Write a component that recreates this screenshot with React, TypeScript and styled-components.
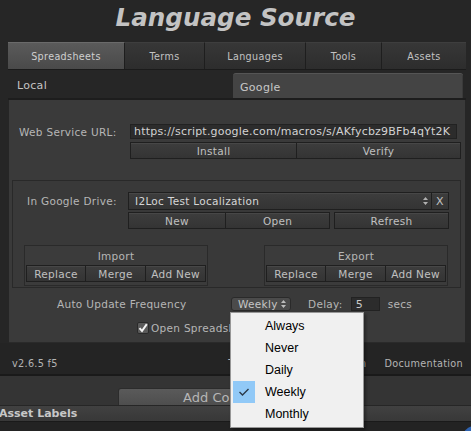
import React from 'react';
import styled, { createGlobalStyle } from 'styled-components';

const GlobalStyle = createGlobalStyle`
  html, body { margin: 0; padding: 0; background: #262626; }
  #root { width: 471px; height: 431px; }
`;

const UI = `"DejaVu Sans", "Liberation Sans", sans-serif`;

const Page = styled.div`
  position: relative;
  width: 471px;
  height: 431px;
  overflow: hidden;
  background: #262626;
  display: flex;
  flex-direction: column;
  font-family: ${UI};
  font-size: 10.5px;
  letter-spacing: 0.3px;
  color: #b6b6b6;
`;

const Title = styled.div`
  flex: none;
  height: 42px;
  box-sizing: border-box;
  padding-bottom: 7px;
  display: flex;
  align-items: center;
  justify-content: center;
  font-size: 24.6px;
  font-weight: bold;
  font-style: italic;
  letter-spacing: 0;
  color: #c3c3c3;
`;

const TabBar = styled.div`
  flex: none;
  display: flex;
  height: 27px;
  margin: 0 5px 0 8px;
  background: #1c1c1c;
`;

const Tab = styled.div<{ $w: number; $active?: boolean }>`
  width: ${(p) => p.$w}px;
  box-sizing: border-box;
  display: flex;
  align-items: center;
  justify-content: center;
  font-size: 9.6px;
  letter-spacing: 0.35px;
  color: ${(p) => (p.$active ? '#cfcfcf' : '#c2c2c2')};
  border-right: 1px solid #1e1e1e;
  border-top: 1px solid ${(p) => (p.$active ? '#6a6a6a' : '#3e3e3e')};
  background: ${(p) =>
    p.$active ? 'linear-gradient(#5a5a5a, #4a4a4a)' : 'linear-gradient(#373737, #2d2d2d)'};
  &:last-child { border-right: none; }
`;

const SourceRow = styled.div`
  flex: none;
  display: flex;
  align-items: flex-end;
  height: 31px;
  box-sizing: border-box;
  margin: 0 5px 0 8px;
  border-top: 1px solid #1b1b1b;
  border-bottom: 2px solid #1d1d1d;
  background: #262626;
`;

const SourceLocal = styled.div`
  flex: 1;
  align-self: center;
  padding-left: 9px;
  padding-top: 3px;
  font-size: 11px;
  color: #c4c4c4;
`;

const SourceGoogle = styled.div`
  width: 230px;
  height: 25px;
  margin-right: 3px;
  box-sizing: border-box;
  padding: 2px 0 0 7px;
  display: flex;
  align-items: center;
  font-size: 11px;
  color: #c8c8c8;
  background: #444444;
  border-top: 1px solid #555;
  border-radius: 3px 3px 0 0;
  box-shadow: inset -1px 0 0 #3a3a3a;
`;

const Panel = styled.div`
  flex: none;
  height: 243px;
  margin: 0 6px 0 9px;
  background: #3a3a3a;
  display: flex;
  flex-direction: column;
  border-bottom: 1px solid #2a2a2a;
  box-sizing: border-box;
`;

const FieldRow = styled.div<{ $top: number; $left: number; $h: number }>`
  display: flex;
  align-items: center;
  margin-top: ${(p) => p.$top}px;
  margin-left: ${(p) => p.$left}px;
  height: ${(p) => p.$h}px;
  flex: none;
`;

const Label = styled.div<{ $w?: number; $ml?: number }>`
  width: ${(p) => (p.$w ? `${p.$w}px` : 'auto')};
  margin-left: ${(p) => p.$ml ?? 0}px;
  flex: none;
  white-space: nowrap;
  color: #b6b6b6;
`;

const TextField = styled.div<{ $w: number }>`
  width: ${(p) => p.$w}px;
  height: 100%;
  box-sizing: border-box;
  padding-left: 3px;
  display: flex;
  align-items: center;
  overflow: hidden;
  white-space: nowrap;
  background: #2c2c2c;
  border: 1px solid #222;
  color: #d2d2d2;
  font-size: 11px;
  letter-spacing: 0.2px;
`;

const ButtonStrip = styled.div<{ $top: number; $left: number }>`
  display: flex;
  flex: none;
  height: 17px;
  margin-top: ${(p) => p.$top}px;
  margin-left: ${(p) => p.$left}px;
`;

const Button = styled.div<{ $w: number; $gap?: number }>`
  width: ${(p) => p.$w}px;
  margin-left: ${(p) => p.$gap ?? 0}px;
  height: 100%;
  box-sizing: border-box;
  display: flex;
  align-items: center;
  justify-content: center;
  background: linear-gradient(#3d3d3d, #343434);
  border: 1px solid #1f1f1f;
  border-left-width: ${(p) => (p.$gap === undefined ? 0 : 1)}px;
  box-shadow: inset 0 1px 0 #474747;
  color: #c0c0c0;
  white-space: nowrap;
  &:first-child { border-left-width: 1px; }
`;

const DriveBox = styled.div`
  flex: none;
  margin: 21px 0 0 3px;
  width: 449px;
  height: 108px;
  box-sizing: border-box;
  border: 1px solid #292929;
  background: #393939;
  display: flex;
  flex-direction: column;
`;

const Select = styled.div<{ $w: number }>`
  width: ${(p) => p.$w}px;
  height: 100%;
  box-sizing: border-box;
  padding: 0 3px 0 6px;
  display: flex;
  align-items: center;
  justify-content: space-between;
  background: linear-gradient(#3d3d3d, #343434);
  border: 1px solid #1f1f1f;
  box-shadow: inset 0 1px 0 #474747;
  color: #d6d6d6;
`;

const ClearButton = styled.div`
  width: 17px;
  height: 100%;
  box-sizing: border-box;
  display: flex;
  align-items: center;
  justify-content: center;
  background: linear-gradient(#3d3d3d, #343434);
  border: 1px solid #1f1f1f;
  border-left: none;
  box-shadow: inset 0 1px 0 #474747;
  color: #c2c2c2;
  font-size: 11px;
`;

const GroupRow = styled.div`
  display: flex;
  gap: 56px;
  margin: 16px 0 0 11px;
`;

const Group = styled.div`
  width: 184px;
  height: 41px;
  box-sizing: border-box;
  border: 1px solid #2a2a2a;
  background: #3b3b3b;
  display: flex;
  flex-direction: column;
  padding: 0 1px;
`;

const GroupHead = styled.div`
  height: 19px;
  display: flex;
  align-items: center;
  justify-content: center;
  color: #b6b6b6;
`;

const GroupButtons = styled.div`
  display: flex;
  height: 17px;
`;

const UpdateRow = styled.div`
  display: flex;
  align-items: center;
  height: 14px;
  margin: 9px 0 0 48px;
`;

const MiniPopup = styled.div`
  width: 60px;
  height: 14px;
  margin-left: 49px;
  box-sizing: border-box;
  padding: 0 4px 0 6px;
  display: flex;
  align-items: center;
  justify-content: space-between;
  background: #4b4b4b;
  border: 1px solid #2a2a2a;
  border-radius: 3px;
  color: #c6c6c6;
`;

const DelayField = styled.div`
  width: 29px;
  height: 14px;
  margin: 0 8px 0 8px;
  box-sizing: border-box;
  padding-left: 4px;
  display: flex;
  align-items: center;
  background: #2c2c2c;
  border: 1px solid #222;
  color: #c8c8c8;
  font-size: 11px;
`;

const CheckRow = styled.div`
  display: flex;
  align-items: center;
  gap: 2px;
  height: 12px;
  margin: 11px 0 0 128px;
  white-space: nowrap;
`;

const CheckBox = styled.div`
  width: 12px;
  height: 12px;
  box-sizing: border-box;
  border: 1px solid #2a2a2a;
  border-radius: 2px;
  background: #5a5a5a;
  display: flex;
  align-items: center;
  justify-content: center;
`;

const Footer = styled.div`
  flex: none;
  height: 33px;
  box-sizing: border-box;
  padding: 15px 8px 0 12px;
  display: flex;
  gap: 18px;
  background: #242424;
  border-bottom: 2px solid #1a1a1a;
  font-size: 9.7px;
  color: #b4b4b4;
`;

const FooterLink = styled.span<{ $first?: boolean }>`
  margin-left: ${(p) => (p.$first ? 'auto' : '0')};
  white-space: nowrap;
`;

const InspectorArea = styled.div`
  flex: none;
  height: 29px;
  box-sizing: border-box;
  padding-top: 12px;
  display: flex;
  justify-content: flex-start;
  background: #343434;
`;

const AddComponent = styled.div`
  width: 235px;
  height: 17px;
  margin-left: 118px;
  box-sizing: border-box;
  display: flex;
  align-items: center;
  justify-content: center;
  background: linear-gradient(#5a5a5a, #4e4e4e);
  border: 1px solid #2c2c2c;
  border-bottom: none;
  border-radius: 3px 3px 0 0;
  font-size: 13px;
  letter-spacing: 0;
  color: #b6b6b6;
`;

const LabelsBar = styled.div`
  flex: none;
  height: 16px;
  box-sizing: border-box;
  display: flex;
  align-items: center;
  background: linear-gradient(#414141, #383838);
  border-top: 1px solid #262626;
  font-size: 11px;
  font-weight: bold;
  letter-spacing: 0;
  color: #c8c8c8;
  margin-left: -1px;
`;

const Rest = styled.div`
  flex: 1;
  background: #232323;
  border-top: 1px solid #1a1a1a;
`;

const Menu = styled.div`
  position: absolute;
  left: 230px;
  top: 312px;
  width: 134px;
  height: 116px;
  box-sizing: border-box;
  padding: 2px;
  background: #f0f0f0;
  border: 1px solid #979797;
  box-shadow: 2px 2px 3px rgba(0, 0, 0, 0.35);
  display: flex;
  flex-direction: column;
  font-family: "Liberation Sans", Arial, sans-serif;
  font-size: 12.5px;
  letter-spacing: 0;
  color: #000;
`;

const MenuItem = styled.div`
  height: 22px;
  display: flex;
  align-items: center;
`;

const MenuCheck = styled.div<{ $on?: boolean }>`
  width: 22px;
  height: 22px;
  margin-right: 10px;
  display: flex;
  align-items: center;
  justify-content: center;
  background: ${(p) => (p.$on ? '#91c9f7' : 'transparent')};
`;

const Orb = styled.div`
  position: absolute;
  left: 462px;
  top: 426px;
  width: 26px;
  height: 26px;
  border-radius: 50%;
  background: #2f63b0;
`;

const Arrows = ({ color = '#b0b0b0' }: { color?: string }) => (
  <svg width="5" height="8" viewBox="0 0 5 8">
    <path d="M2.5 0 L5 3 L0 3 Z M0 5 L5 5 L2.5 8 Z" fill={color} />
  </svg>
);

const tabs = [
  { name: 'Spreadsheets', w: 117, active: true },
  { name: 'Terms', w: 80 },
  { name: 'Languages', w: 101 },
  { name: 'Tools', w: 76 },
  { name: 'Assets', w: 84 },
];

const frequencies = ['Always', 'Never', 'Daily', 'Weekly', 'Monthly'];

const ImportExport = ({ title }: { title: string }) => (
  <Group>
    <GroupHead>{title}</GroupHead>
    <GroupButtons>
      <Button $w={60}>Replace</Button>
      <Button $w={60}>Merge</Button>
      <Button $w={60}>Add New</Button>
    </GroupButtons>
  </Group>
);

export default function App() {
  return (
    <>
      <GlobalStyle />
      <Page>
        <Title>Language Source</Title>
        <TabBar>
          {tabs.map((t) => (
            <Tab key={t.name} $w={t.w} $active={t.active}>
              {t.name}
            </Tab>
          ))}
        </TabBar>
        <SourceRow>
          <SourceLocal>Local</SourceLocal>
          <SourceGoogle>Google</SourceGoogle>
        </SourceRow>
        <Panel>
          <FieldRow $top={24} $left={10} $h={15}>
            <Label $w={111}>Web Service URL:</Label>
            <TextField $w={327}>https://script.google.com/macros/s/AKfycbz9BFb4qYt2K</TextField>
          </FieldRow>
          <ButtonStrip $top={3} $left={121}>
            <Button $w={167}>Install</Button>
            <Button $w={164}>Verify</Button>
          </ButtonStrip>
          <DriveBox>
            <FieldRow $top={11} $left={14} $h={18}>
              <Label $w={101}>In Google Drive:</Label>
              <Select $w={304}>
                <span>I2Loc Test Localization</span>
                <Arrows />
              </Select>
              <ClearButton>X</ClearButton>
            </FieldRow>
            <ButtonStrip $top={2} $left={115}>
              <Button $w={98}>New</Button>
              <Button $w={104}>Open</Button>
              <Button $w={115} $gap={4}>Refresh</Button>
            </ButtonStrip>
            <GroupRow>
              <ImportExport title="Import" />
              <ImportExport title="Export" />
            </GroupRow>
          </DriveBox>
          <UpdateRow>
            <Label $w={125}>Auto Update Frequency</Label>
            <MiniPopup>
              <span>Weekly</span>
              <Arrows color="#bdbdbd" />
            </MiniPopup>
            <Label $ml={17}>Delay:</Label>
            <DelayField>5</DelayField>
            <Label>secs</Label>
          </UpdateRow>
          <CheckRow>
            <CheckBox>
              <svg width="10" height="10" viewBox="0 0 10 10">
                <path d="M1.5 5.2 L4 8 L8.8 1.2" stroke="#f4f4f4" strokeWidth="2" fill="none" />
              </svg>
            </CheckBox>
            <span>Open Spreadsheet after Export</span>
          </CheckRow>
        </Panel>
        <Footer>
          <span>v2.6.5 f5</span>
          <FooterLink $first>Tutorials</FooterLink>
          <FooterLink>Ask a Question</FooterLink>
          <FooterLink>Documentation</FooterLink>
        </Footer>
        <InspectorArea>
          <AddComponent>Add Component</AddComponent>
        </InspectorArea>
        <LabelsBar>Asset Labels</LabelsBar>
        <Rest />
        <Menu>
          {frequencies.map((f) => (
            <MenuItem key={f}>
              <MenuCheck $on={f === 'Weekly'}>
                {f === 'Weekly' && (
                  <svg width="12" height="10" viewBox="0 0 12 10">
                    <path d="M1.5 5 L4.5 8 L10.5 2" stroke="#2b3a4a" strokeWidth="1.4" fill="none" />
                  </svg>
                )}
              </MenuCheck>
              <span>{f}</span>
            </MenuItem>
          ))}
        </Menu>
        <Orb />
      </Page>
    </>
  );
}
